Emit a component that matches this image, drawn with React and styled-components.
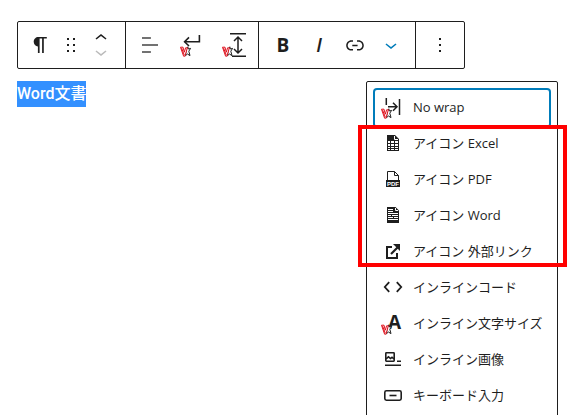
import React from 'react';
import styled, { createGlobalStyle } from 'styled-components';

const GlobalStyle = createGlobalStyle`
  * {
    box-sizing: border-box;
  }
  body {
    margin: 0;
    background: #fff;
    color: #1e1e1e;
    font-family: 'Open Sans', 'Noto Sans CJK JP', sans-serif;
    font-size: 13px;
  }
`;

const Page = styled.main`
  height: 100vh;
  overflow: hidden;
  padding: 21px 17px 0;
`;

const Toolbar = styled.div`
  display: inline-flex;
  height: 48px;
  border: 1px solid #1e1e1e;
  border-radius: 2px;
  vertical-align: top;
`;

const Group = styled.div`
  display: flex;
  align-items: center;
  padding: ${({ $pad }) => $pad || '0 6px'};

  & + & {
    border-left: 1px solid #1e1e1e;
  }
`;

const ToolButton = styled.button`
  display: flex;
  align-items: center;
  justify-content: center;
  width: ${({ $width }) => $width || 36}px;
  height: 36px;
  padding: 0;
  border: 0;
  background: transparent;
  color: ${({ $active }) => ($active ? '#007cba' : '#1e1e1e')};
`;

const Movers = styled.div`
  display: flex;
  flex-direction: column;
  gap: 8px;
  width: 30px;
`;

const MoverButton = styled.button`
  display: flex;
  justify-content: center;
  height: 8px;
  padding: 0;
  border: 0;
  background: transparent;
  color: #1e1e1e;

  &:disabled {
    color: #bbb;
  }
`;

const Editor = styled.div`
  display: flex;
  align-items: flex-start;
  justify-content: space-between;
  margin-top: 12px;
`;

const Paragraph = styled.p`
  margin: 0;
  font-family: Roboto, 'Noto Sans CJK JP', sans-serif;
  font-size: 16px;
  font-weight: 500;
  line-height: 26px;
`;

const Selected = styled.mark`
  display: inline-block;
  background: #3390ff;
  color: #fff;
`;

const Menu = styled.div`
  min-width: 192px;
  padding: 8px;
  border: 1px solid #1e1e1e;
  border-radius: 2px;
  background: #fff;
`;

const MenuItem = styled.button`
  display: flex;
  align-items: center;
  gap: 8px;
  width: 100%;
  height: 36px;
  padding: 0 6px 2px;
  border: 0;
  border-radius: 2px;
  background: transparent;
  box-shadow: ${({ $focused }) => ($focused ? '0 0 0 2px #007cba' : 'none')};
  color: #1e1e1e;
  font: inherit;
  line-height: 20px;
  text-align: left;
  white-space: nowrap;
`;

const Marked = styled.div`
  position: relative;

  &::after {
    content: '';
    position: absolute;
    inset: -1px -18px 3px -17px;
    border: 4px solid #f00;
    pointer-events: none;
  }
`;

const Svg = styled.svg`
  display: block;
  flex: none;
  overflow: visible;
  fill: currentColor;
`;

const Icon = ({ children, size = 24 }) => (
  <Svg width={size} height={size} viewBox={`0 0 ${size} ${size}`} aria-hidden='true'>
    {children}
  </Svg>
);

const Stroke = ({ children, width = 1.5 }) => (
  <g fill='none' stroke='currentColor' strokeWidth={width}>
    {children}
  </g>
);

// plugin mark in the lower left corner: red V and half a star
const Badge = () => (
  <g fill='#fff' strokeWidth='1'>
    <path
      d='M6.4 16.6L7.8 13.8L8.4 16L10.6 15.4L8.8 18.2L10 22.6L7.4 21L5.4 22.8Z'
      stroke='#1e1e1e'
    />
    <path d='M0.5 14.2H3L4.3 19.2L5.6 14.8H7.4L4.9 23.2H3.6Z' stroke='#e0101c' />
    <path d='M1.6 15L4.2 22' stroke='#e0101c' />
  </g>
);

const ParagraphIcon = () => (
  <Icon>
    <path d='M18.8 4H10.4c-2.600 0-4.700 2.100-4.700 4.800s1.900 4.500 4.200 4.800V20h1.700V5.500h2.500V20h1.700V5.500h3V4z' />
  </Icon>
);

const DragIcon = () => (
  <Icon size={18}>
    <path d='M5 4h2V2H5v2zm6-2v2h2V2h-2zm-6 8h2V8H5v2zm6 0h2V8h-2v2zm-6 6h2v-2H5v2zm6 0h2v-2h-2v2z' />
  </Icon>
);

const AlignIcon = () => (
  <Icon>
    <path
      fill='#444'
      d='M4 19.800h8.900v-1.500H4v1.500zm8.900-15.600H4v1.500h8.900V4.200zm-8.900 7v1.500h16v-1.500H4z'
    />
  </Icon>
);

const BreakIcon = () => (
  <Icon>
    <Stroke width={1.6}>
      <path d='M19.400 2V8.700H4.800' />
      <path d='M9 4.400L4.600 8.700L9 13' />
    </Stroke>
    <Badge />
  </Icon>
);

const LineHeightIcon = () => (
  <Icon>
    <Stroke>
      <path d='M8 0.800H24M10 23.200H24' />
      <path d='M16 4V20M12 8L16 4L20 8M12 16L16 20L20 16' />
    </Stroke>
    <Badge />
  </Icon>
);

const BoldIcon = () => (
  <Icon>
    <text x='12' y='19' textAnchor='middle' fontFamily='Open Sans' fontSize='19' fontWeight='700'>
      B
    </text>
  </Icon>
);

const ItalicIcon = () => (
  <Icon>
    <text
      x='12'
      y='19'
      textAnchor='middle'
      fontFamily='Open Sans'
      fontSize='19'
      fontWeight='600'
      fontStyle='italic'
    >
      I
    </text>
  </Icon>
);

const LinkIcon = () => (
  <Icon>
    <path d='M15.600 7.200H14v1.500h1.600c2 0 3.700 1.700 3.700 3.700s-1.700 3.700-3.700 3.700H14v1.500h1.600c2.800 0 5.200-2.300 5.200-5.200 0-2.900-2.300-5.200-5.200-5.200zM4.700 12.400c0-2 1.700-3.700 3.700-3.700H10V7.200H8.400c-2.900 0-5.200 2.300-5.200 5.200 0 2.900 2.300 5.200 5.200 5.200H10v-1.500H8.400c-2 0-3.700-1.700-3.700-3.700zm4.600.9h5.300v-1.500H9.300v1.500z' />
  </Icon>
);

const ChevronIcon = () => (
  <Icon>
    <path d='M17.500 11.600L12 16l-5.500-4.400.9-1.200L12 14l4.500-3.600 1 1.200z' />
  </Icon>
);

const MoreIcon = () => (
  <Icon>
    <path d='M13 19h-2v-2h2v2zm0-6h-2v-2h2v2zm0-6h-2V5h2v2z' />
  </Icon>
);

const NoWrapIcon = () => (
  <Icon>
    <Stroke>
      <path d='M5.300 3V10M18.500 4V20M7 11.700H16M12 7.700L16 11.700L12 15.700' />
    </Stroke>
    <Badge />
  </Icon>
);

const ExcelIcon = () => (
  <Icon>
    <path d='M6 4h8l4 4v12H6z' />
    <path d='M13.500 5V8.500H17' stroke='#fff' strokeWidth='1' fill='none' />
    <path
      d='M7 10h2v2H7zM10 10h3v2h-3zM14 10h3v2h-3zM7 13h2v2H7zM10 13h3v2h-3zM14 13h3v2h-3zM7 16h2v1H7zM10 16h3v1h-3zM14 16h3v1h-3zM7 18h2v1H7zM10 18h3v1h-3zM14 18h3v1h-3z'
      fill='#fff'
    />
  </Icon>
);

const PdfIcon = () => (
  <Icon>
    <Stroke width={1}>
      <path d='M6.500 14V4.500H13.500L17.500 8.500V14M13.500 4.500V8.500H17.500' />
    </Stroke>
    <path d='M5 13H19V20H5z' />
    <text
      x='12'
      y='19'
      textAnchor='middle'
      fill='#fff'
      fontFamily='Liberation Sans'
      fontSize='6'
      fontWeight='700'
    >
      PDF
    </text>
  </Icon>
);

const WordIcon = () => (
  <Icon>
    <path d='M6 4h8.500L18 7.500V20H6z' />
    <path
      d='M7 6.500H12M7 8.500H12M7 10.500H17M7 12.500H10M11 12.500H17M7 14.500H12M13 14.500H17M7 16.500H17M14.500 5V7.500H17'
      stroke='#fff'
      strokeWidth='1'
      fill='none'
    />
  </Icon>
);

const ExternalIcon = () => (
  <Icon>
    <Stroke width={2}>
      <path d='M11 8H6V19H16V14' />
      <path d='M10 15L17 8' strokeWidth='2.200' />
    </Stroke>
    <path d='M12 5H19V12L16.700 9.700L14.300 7.300z' />
  </Icon>
);

const CodeIcon = () => (
  <Icon>
    <Stroke width={1.8}>
      <path d='M8.200 7.200L3.800 12L8.200 16.800M15.800 7.200L20.200 12L15.800 16.800' />
    </Stroke>
  </Icon>
);

const FontSizeIcon = () => (
  <Icon>
    <text x='13.500' y='18' textAnchor='middle' fontFamily='Open Sans' fontSize='19' fontWeight='700'>
      A
    </text>
    <Badge />
  </Icon>
);

const InlineImageIcon = () => (
  <Icon>
    <Stroke width={1.6}>
      <rect x='4.800' y='5.800' width='8.400' height='8.400' rx='0.600' />
      <path d='M5 11.800L7.500 9.800L9.500 11.500L11 10.300L13 11.800M16 14.200H20M4 18.200H20' />
    </Stroke>
  </Icon>
);

const KeyboardIcon = () => (
  <Icon>
    <Stroke width={1.6}>
      <rect x='3.800' y='7.800' width='16.400' height='9.400' rx='1.600' />
      <path d='M8.500 12.500H15.500' />
    </Stroke>
  </Icon>
);

const fileItems = [
  { label: 'アイコン Excel', icon: ExcelIcon },
  { label: 'アイコン PDF', icon: PdfIcon },
  { label: 'アイコン Word', icon: WordIcon },
  { label: 'アイコン 外部リンク', icon: ExternalIcon },
];

const inlineItems = [
  { label: 'インラインコード', icon: CodeIcon },
  { label: 'インライン文字サイズ', icon: FontSizeIcon },
  { label: 'インライン画像', icon: InlineImageIcon },
  { label: 'キーボード入力', icon: KeyboardIcon },
];

const renderItem = ({ label, icon: ItemIcon }) => (
  <MenuItem type='button' role='menuitem' key={label}>
    <ItemIcon />
    {label}
  </MenuItem>
);

const BlockToolbar = () => (
  <Toolbar role='toolbar'>
    <Group $pad='0 9px 0 6px'>
      <ToolButton type='button' aria-label='段落' $width={32}>
        <ParagraphIcon />
      </ToolButton>
      <ToolButton type='button' aria-label='ドラッグ' $width={30}>
        <DragIcon />
      </ToolButton>
      <Movers>
        <MoverButton type='button' aria-label='上に移動'>
          <Svg width='24' height='8' viewBox='0 7 24 8'>
            <path d='M6.500 12.400L12 8l5.500 4.400-.9 1.200L12 10l-4.500 3.600-1-1.200z' />
          </Svg>
        </MoverButton>
        <MoverButton type='button' aria-label='下に移動' disabled>
          <Svg width='24' height='8' viewBox='0 9 24 8'>
            <path d='M17.500 11.600L12 16l-5.500-4.400.9-1.200L12 14l4.500-3.600 1 1.200z' />
          </Svg>
        </MoverButton>
      </Movers>
    </Group>
    <Group $pad='0 3px'>
      <ToolButton type='button' aria-label='配置' $width={42}>
        <AlignIcon />
      </ToolButton>
      <ToolButton type='button' aria-label='改行' $width={42}>
        <BreakIcon />
      </ToolButton>
      <ToolButton type='button' aria-label='行の高さ' $width={42}>
        <LineHeightIcon />
      </ToolButton>
    </Group>
    <Group>
      <ToolButton type='button' aria-label='太字'>
        <BoldIcon />
      </ToolButton>
      <ToolButton type='button' aria-label='イタリック'>
        <ItalicIcon />
      </ToolButton>
      <ToolButton type='button' aria-label='リンク'>
        <LinkIcon />
      </ToolButton>
      <ToolButton type='button' aria-label='さらに表示' aria-expanded='true' $active>
        <ChevronIcon />
      </ToolButton>
    </Group>
    <Group>
      <ToolButton type='button' aria-label='オプション'>
        <MoreIcon />
      </ToolButton>
    </Group>
  </Toolbar>
);

const App = () => {
  return (
    <>
      <GlobalStyle />
      <Page lang='ja'>
        <BlockToolbar />
        <Editor>
          <Paragraph>
            <Selected>Word文書</Selected>
          </Paragraph>
          <Menu role='menu'>
            <MenuItem type='button' role='menuitem' $focused>
              <NoWrapIcon />
              No wrap
            </MenuItem>
            <Marked>{fileItems.map(renderItem)}</Marked>
            {inlineItems.map(renderItem)}
          </Menu>
        </Editor>
      </Page>
    </>
  );
};

export default App;
